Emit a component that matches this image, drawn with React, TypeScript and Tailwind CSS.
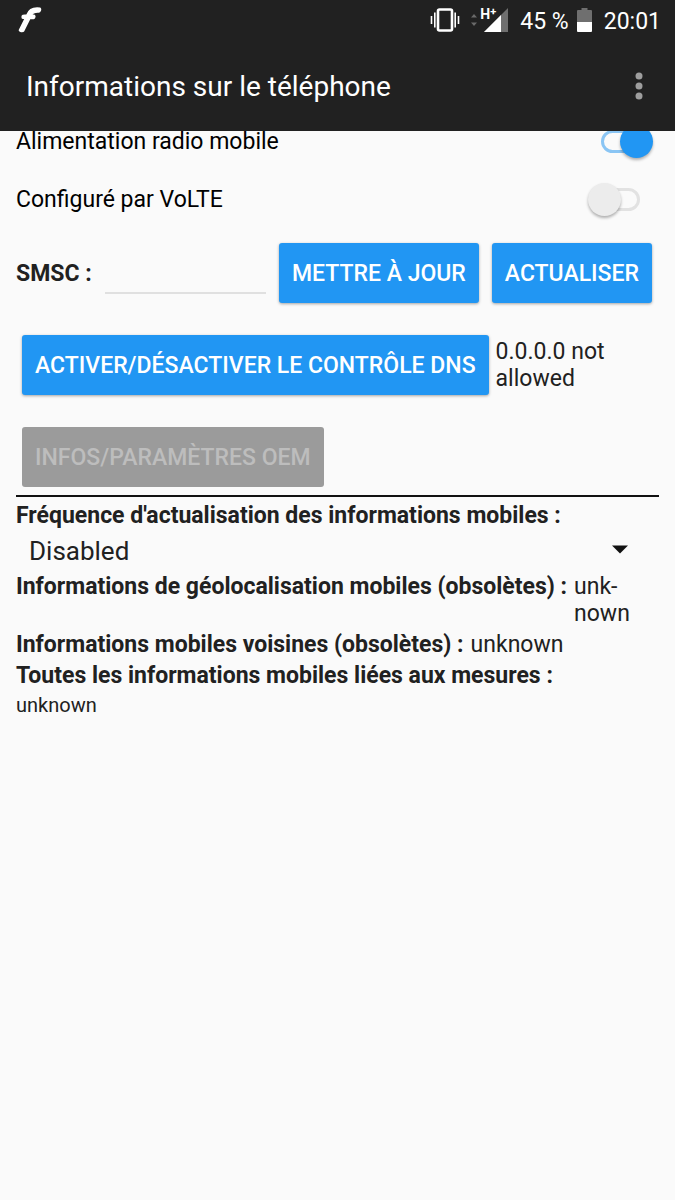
import { useState, type JSX } from "react"

const StatusBar = (): JSX.Element => {
  return (
    <div className="flex h-10 items-center justify-between pl-4 pr-3.5">
      <svg width="28" height="28" viewBox="0 0 28 28" aria-hidden="true">
        <path
          d="M24 2.300C17 1.300 13 3.500 10.900 9L7 9.500C5.900 9.900 5.900 12 7 12.200H9.500L3.500 24C3.300 25.600 7 26 7.800 24.500L13.800 12.500H17.500C18.900 12.100 19.200 9.500 18 9.200H15.200C16.500 6.600 18.500 5.800 22.500 6C24.200 5.800 25 3.200 24 2.300z"
          fill="white"
          stroke="white"
          strokeWidth="1.6"
          strokeLinejoin="round"
        />
      </svg>

      <div className="flex items-center text-[23px] leading-[27px]">
        {/* vibrate mode */}
        <svg className="mr-2.5" width="30" height="24" viewBox="0 0 30 24" aria-hidden="true">
          <rect x="8" y="1.5" width="14" height="21" rx="1.5" fill="none" stroke="white" strokeWidth="2.6" />
          <path d="M1.5 8v8M4.8 4.5v15M25.2 4.5v15M28.5 8v8" stroke="white" strokeWidth="1.6" />
        </svg>
        {/* data activity */}
        <svg className="mr-1" width="8" height="14" viewBox="0 0 8 14" aria-hidden="true">
          <path d="M1 4.500L4 1L7 4.500zM1 9.500L4 13L7 9.500z" fill="#6a6a6a" />
        </svg>
        <div className="relative mr-3 pl-0.5">
          <svg className="block" width="24" height="24" viewBox="0 0 24 24" aria-hidden="true">
            <path d="M24 0V24H0z" fill="#6f6f6f" />
            <path d="M17 7V24H0z" fill="white" />
          </svg>
          <span className="absolute -left-0.5 -top-0.5 flex text-[14px] font-bold leading-4">
            H<span className="text-[11px] leading-3">+</span>
          </span>
        </div>
        <span className="pt-0.5">45 %</span>
        <svg className="ml-2 mr-3" width="15" height="24" viewBox="0 0 15 24" aria-hidden="true">
          <path d="M4.5 0h6v2H14a1 1 0 0 1 1 1v11H0V3a1 1 0 0 1 1-1h3.500z" fill="#6f6f6f" />
          <path d="M0 14h15v9a1 1 0 0 1-1 1H1a1 1 0 0 1-1-1z" fill="white" />
        </svg>
        <span className="pt-0.5">20:01</span>
      </div>
    </div>
  )
}

const Switch = ({ id, defaultChecked }: { id: string; defaultChecked?: boolean }): JSX.Element => {
  const [on, setOn] = useState(!!defaultChecked);

  return (
    <input
      id={id}
      type="checkbox"
      role="switch"
      checked={on}
      onChange={(e) => setOn(e.target.checked)}
      className="mr-1.5 grid h-[33px] w-[65px] shrink-0 appearance-none items-center before:col-start-1 before:row-start-1 before:h-[23px] before:w-[39px] before:justify-self-center before:rounded-full before:border-3 before:border-[#e2e2e2] before:content-[''] after:col-start-1 after:row-start-1 after:size-[33px] after:rounded-full after:bg-[#ececec] after:shadow-[0_2px_3px_rgba(0,0,0,0.3)] after:content-[''] checked:before:border-[#8ac5f4] checked:after:justify-self-end checked:after:bg-[#2196f3]"
    />
  )
}

const buttonClass = "h-[60px] shrink-0 rounded-[3px] bg-[#2196f3] px-[13px] font-medium text-white shadow-[0_1px_3px_rgba(0,0,0,0.35)]";

export default function App(): JSX.Element {
  return (
    <div className="min-h-screen bg-[#fafafa] font-['Roboto',sans-serif] text-[23px] leading-[27px] text-[#212121]">
      <header className="relative z-10 bg-[#212121] text-white">
        <StatusBar />
        <div className="flex h-[91px] items-center justify-between pl-[26px] pr-6">
          <h1 className="pt-0.5 text-[28px] leading-8">Informations sur le téléphone</h1>
          <button type="button" aria-label="Plus d'options" className="flex w-6 justify-center">
            <svg width="8" height="28" viewBox="0 0 8 28">
              <circle cx="4" cy="4" r="3.500" fill="#9e9e9e" />
              <circle cx="4" cy="14" r="3.500" fill="#9e9e9e" />
              <circle cx="4" cy="24" r="3.500" fill="#9e9e9e" />
            </svg>
          </button>
        </div>
      </header>

      <main className="px-4">
        {/* first row is scrolled partly under the header */}
        <div className="flex h-5 items-center justify-between text-black">
          <label htmlFor="radio">Alimentation radio mobile</label>
          <Switch id="radio" defaultChecked />
        </div>
        <div className="flex h-24 items-center justify-between text-black">
          <label htmlFor="volte">Configuré par VoLTE</label>
          <Switch id="volte" />
        </div>

        <div className="-mt-1 flex items-center gap-[13px] pr-[7px]">
          <label htmlFor="smsc" className="font-bold">SMSC :</label>
          <input
            id="smsc"
            type="text"
            className="h-[42px] min-w-0 flex-1 border-b-2 border-[#e0e0e0] bg-transparent outline-none"
          />
          <button type="button" className={buttonClass}>METTRE À JOUR</button>
          <button type="button" className={buttonClass}>ACTUALISER</button>
        </div>

        <div className="mt-8 flex items-center gap-[7px] pl-1.5">
          <button type="button" className={buttonClass}>ACTIVER/DÉSACTIVER LE CONTRÔLE DNS</button>
          <span>0.0.0.0 not allowed</span>
        </div>

        <button
          type="button"
          disabled
          className="ml-1.5 mt-8 block h-[60px] rounded-[3px] bg-[#9b9b9b] px-[13px] font-medium text-[#bdbdbd]"
        >
          INFOS/PARAMÈTRES OEM
        </button>

        <hr className="mt-2 border-t-2 border-[#111111]" />

        <div className="mt-[5px] flex flex-col gap-1">
          <label htmlFor="rate" className="font-bold">
            Fréquence d'actualisation des informations mobiles :
          </label>
          <div className="relative">
            <select id="rate" className="h-9 w-full appearance-none bg-transparent pl-[13px] text-[26px] leading-9 outline-none">
              <option>Disabled</option>
            </select>
            <svg
              className="pointer-events-none absolute right-[31px] top-3"
              width="16"
              height="9"
              viewBox="0 0 16 9"
              aria-hidden="true"
            >
              <path d="M0 0.500H16L8 8.500z" fill="#111111" />
            </svg>
          </div>
          <div className="flex gap-[7px]">
            <b className="shrink-0">Informations de géolocalisation mobiles (obsolètes) :</b>
            <span>unk&shy;nown</span>
          </div>
          <div className="flex gap-[7px]">
            <b className="shrink-0">Informations mobiles voisines (obsolètes) :</b>
            <span>unknown</span>
          </div>
          <b>Toutes les informations mobiles liées aux mesures :</b>
          <span className="text-[20px] leading-6">unknown</span>
        </div>
      </main>
    </div>
  )
}
